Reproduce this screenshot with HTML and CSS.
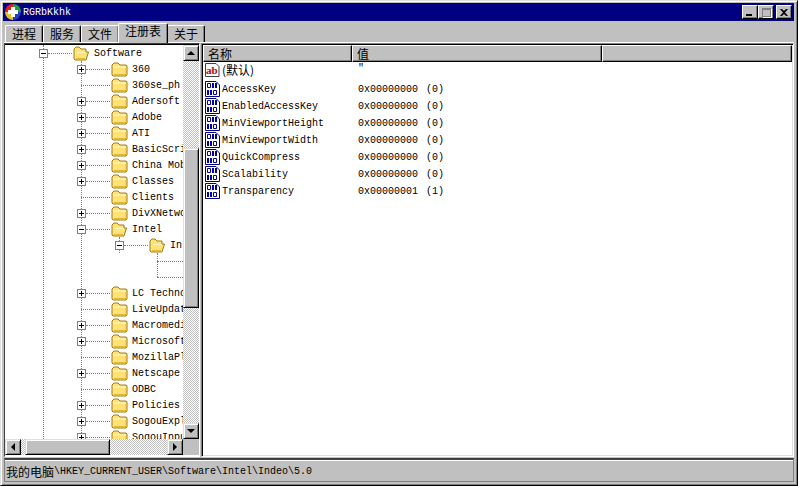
FILE: index.html
```html
<!DOCTYPE html>
<html>
<head>
    <title>RGRbKkhk</title>
    <link rel="stylesheet" href="styles.css">
</head>
<body>
    <svg class="defs" width="0" height="0">
        <symbol id="folder" viewBox="0 0 18 16">
            <path d="M2 4 L4 2 H8 L10 4 H16 L17 5 V14 L16 15 H3 L2 14 Z" fill="#ffe27a" stroke="#9c7c10"/>
            <path d="M3 6 H16" stroke="#fff6c0"/>
            <path d="M4 13.5 H16 V7" fill="none" stroke="#e8b830"/>
        </symbol>
        <symbol id="open" viewBox="0 0 18 16">
            <path d="M2 4 L4 2 H7 L9 4 H14 V7 H16.5 L14 15 H3 L2 14 Z" fill="#ffe27a" stroke="#9c7c10"/>
            <path d="M5 7.5 H14" stroke="#fff6c0"/>
            <path d="M4 13.5 H13" stroke="#e8b830"/>
        </symbol>
        <symbol id="bin" viewBox="0 0 16 16">
            <path d="M1.5 .5 H12 L15.5 4 V15.5 H1.5 Z" fill="#fff" stroke="#000080"/>
            <path d="M3.500 2.500 h3 v4 h-3 z M9.500 9.500 h3 v4 h-3 z" fill="#fff" stroke="#0000a0"/>
            <path d="M8 2 h2 v5 h-2 z M11 2 h2 v5 h-2 z M3 9 h2 v5 h-2 z M6 9 h2 v5 h-2 z" fill="#0000a0"/>
        </symbol>
        <symbol id="str" viewBox="0 0 16 16">
            <path d="M1.500 .5 H12 L15 3.500 V13.500 H1.500 Z" fill="#fff" stroke="#404040"/>
            <text x="2" y="10.500" class="ab-text">ab</text>
        </symbol>
    </svg>

    <div class="window">
        <div class="titlebar">
            <svg class="logo" width="16" height="16" viewBox="0 0 16 16">
                <path d="M8 8 V0 A8 8 0 0 0 0 8 Z" fill="#e02020"/>
                <path d="M8 8 V0 A8 8 0 0 1 16 8 Z" fill="#20a040"/>
                <path d="M8 8 H16 A8 8 0 0 1 8 16 Z" fill="#2040c0"/>
                <path d="M8 8 H0 A8 8 0 0 0 8 16 Z" fill="#e8c020"/>
                <path d="M6 3 H10 V6 H13 V10 H10 V13 H6 V10 H3 V6 H6 Z" fill="#fff"/>
            </svg>
            <span class="title">RGRbKkhk</span>
            <div class="winbtns">
                <button class="winbtn"><span class="min"></span></button>
                <button class="winbtn disabled"><span class="max"></span></button>
                <button class="winbtn close">
                    <svg width="8" height="7" viewBox="0 0 8 7"><path d="M0 0 h2 l2 2 l2 -2 h2 l-3 3.5 l3 3.5 h-2 l-2 -2 l-2 2 h-2 l3 -3.5 z" fill="#000"/></svg>
                </button>
            </div>
        </div>

        <div class="tabs">
            <div class="tab">进程</div>
            <div class="tab">服务</div>
            <div class="tab">文件</div>
            <div class="tab active">注册表</div>
            <div class="tab">关于</div>
        </div>

        <div class="panel">
            <div class="tree-box">
                <div class="tree-view">
                    <div class="tree" id="tree"></div>
                    <div class="vline v1"></div>
                    <div class="vline v2"></div>
                    <div class="vline v3"></div>
                    <div class="vline v4"></div>
                </div>
                <div class="vscroll">
                    <div class="sbtn"><i class="arrow up"></i></div>
                    <div class="track vtrack-top"></div>
                    <div class="thumb vthumb"></div>
                    <div class="track"></div>
                    <div class="sbtn"><i class="arrow down"></i></div>
                </div>
                <div class="hscroll">
                    <div class="sbtn"><i class="arrow left"></i></div>
                    <div class="track htrack-left"></div>
                    <div class="thumb hthumb"></div>
                    <div class="track"></div>
                    <div class="sbtn"><i class="arrow right"></i></div>
                </div>
                <div class="corner"></div>
            </div>

            <div class="list-box">
                <div class="list-head">
                    <div class="col c1">名称</div>
                    <div class="col c2">值</div>
                    <div class="col c3"></div>
                </div>
                <div class="list-row default">
                    <svg class="ico" width="16" height="16"><use href="#str"/></svg>
                    <span class="name cn">(默认)</span><span class="val">"</span>
                </div>
                <div class="list-row">
                    <svg class="ico" width="16" height="16"><use href="#bin"/></svg>
                    <span class="name">AccessKey</span><span class="val">0x00000000 (0)</span>
                </div>
                <div class="list-row">
                    <svg class="ico" width="16" height="16"><use href="#bin"/></svg>
                    <span class="name">EnabledAccessKey</span><span class="val">0x00000000 (0)</span>
                </div>
                <div class="list-row">
                    <svg class="ico" width="16" height="16"><use href="#bin"/></svg>
                    <span class="name">MinViewportHeight</span><span class="val">0x00000000 (0)</span>
                </div>
                <div class="list-row">
                    <svg class="ico" width="16" height="16"><use href="#bin"/></svg>
                    <span class="name">MinViewportWidth</span><span class="val">0x00000000 (0)</span>
                </div>
                <div class="list-row">
                    <svg class="ico" width="16" height="16"><use href="#bin"/></svg>
                    <span class="name">QuickCompress</span><span class="val">0x00000000 (0)</span>
                </div>
                <div class="list-row">
                    <svg class="ico" width="16" height="16"><use href="#bin"/></svg>
                    <span class="name">Scalability</span><span class="val">0x00000000 (0)</span>
                </div>
                <div class="list-row">
                    <svg class="ico" width="16" height="16"><use href="#bin"/></svg>
                    <span class="name">Transparency</span><span class="val">0x00000001 (1)</span>
                </div>
            </div>
        </div>

        <div class="statusbar"><span class="cn">我的电脑</span>\HKEY_CURRENT_USER\Software\Intel\Indeo\5.0</div>
    </div>

    <script>
        // name, level, expander: "+", "-" or ""
        const rows = [
            ["Software", 0, "-"], ["360", 1, "+"], ["360se_ph", 1, ""], ["Adersoft", 1, "+"],
            ["Adobe", 1, "+"], ["ATI", 1, "+"], ["BasicScri", 1, "+"], ["China Mob", 1, "+"],
            ["Classes", 1, "+"], ["Clients", 1, ""], ["DivXNetwo", 1, "+"], ["Intel", 1, "-"],
            ["In", 2, "-"], [null, 3], [null, 3],
            ["LC Techno", 1, "+"], ["LiveUpdat", 1, ""], ["Macromedi", 1, "+"], ["Microsoft", 1, "+"],
            ["MozillaPl", 1, ""], ["Netscape", 1, "+"], ["ODBC", 1, ""], ["Policies", 1, "+"],
            ["SogouExpl", 1, "+"], ["SogouInpu", 1, "+"]
        ];

        let html = "";
        for (const [name, level, exp] of rows) {
            if (name === null) {
                html += `<div class="row l${level}"><span class="dash"></span></div>`;
                continue;
            }
            const box = exp ? `<span class="exp">${exp === "-" ? '<i class="h"></i>' : '<i class="h"></i><i class="v"></i>'}</span>` : `<span class="noexp"></span>`;
            const icon = exp === "-" ? "open" : "folder";
            html += `<div class="row l${level}">${box}<span class="dash"></span><svg class="fold" width="18" height="16"><use href="#${icon}"/></svg><span class="label">${name}</span></div>`;
        }
        document.getElementById("tree").innerHTML = html;
    </script>
</body>
</html>
```

FILE: styles.css
```css
* {
    box-sizing: border-box;
}

html, body {
    margin: 0;
    height: 100%;
    overflow: hidden;
}

body {
    background-color: #C0C0C0;
    font-family: "Liberation Mono", "Noto Sans CJK SC", monospace;
    font-size: 10px;
    color: #000;
}

.defs {
    position: absolute;
}

.ab-text {
    font-family: "Liberation Serif", serif;
    font-weight: bold;
    font-size: 11px;
    fill: #c00000;
}

.cn {
    font-family: "Noto Sans CJK SC", sans-serif;
    font-size: 12px;
}

.window {
    width: 798px;
    height: 486px;
    padding: 3px;
    display: flex;
    flex-direction: column;
    background-color: #C0C0C0;
    border: 1px solid;
    border-color: #DFDFDF #000 #000 #DFDFDF;
    box-shadow: inset 1px 1px 0 #FFF, inset -1px -1px 0 #808080;
}

.titlebar {
    height: 18px;
    flex: none;
    margin: -1px 0 0 -1px;
    padding: 0 2px;
    display: flex;
    align-items: center;
    background-color: #000080;
    color: #FFF;
}

.logo {
    margin-right: 2px;
}

.title {
    font-size: 10px;
}

.winbtns {
    margin-left: auto;
    display: flex;
}

.winbtn {
    width: 16px;
    height: 14px;
    padding: 0;
    background-color: #C0C0C0;
    border: 1px solid;
    border-color: #FFF #000 #000 #FFF;
    box-shadow: inset -1px -1px 0 #808080;
    display: flex;
    align-items: center;
    justify-content: center;
}

.winbtn.close {
    margin-left: 2px;
}

.min {
    width: 6px;
    height: 2px;
    background-color: #000;
    margin: 6px 3px 0 0;
}

.max {
    width: 9px;
    height: 9px;
    border: 1px solid #808080;
    border-top-width: 2px;
    box-shadow: 1px 1px 0 #FFF;
}

.tabs {
    height: 22px;
    flex: none;
    padding-left: 1px;
    display: flex;
    align-items: flex-end;
    border-bottom: 1px solid #FFF;
    position: relative;
    z-index: 1;
}

.tab {
    height: 17px;
    padding: 0 6px;
    font-family: "Noto Sans CJK SC", sans-serif;
    font-size: 12px;
    line-height: 15px;
    background-color: #C0C0C0;
    border: 1px solid;
    border-color: #FFF #000 transparent #FFF;
    border-bottom: 0;
    border-radius: 2px 2px 0 0;
    box-shadow: inset -1px 0 0 #808080;
}

.tab.active {
    height: 20px;
    margin: 0 -1px -1px -1px;
    padding: 0 6px;
    line-height: 14px;
    position: relative;
}

.panel {
    flex: 1;
    min-height: 0;
    display: flex;
    gap: 1px;
}

.tree-box {
    width: 196px;
    height: 414px;
    flex: none;
    background-color: #FFF;
    border: 1px solid;
    border-color: #404040 #FFF #FFF #404040;
    box-shadow: inset 0 1px 0 #000;
    padding: 1px 0 0 0;
    display: grid;
    grid-template-columns: 178px 16px;
    grid-template-rows: 394px 16px;
}

.tree-view {
    position: relative;
    overflow: hidden;
}

.row {
    height: 16px;
    display: flex;
    align-items: center;
    position: relative;
    z-index: 1;
}

.row.l0 { padding-left: 34px; }
.row.l1 { padding-left: 72px; }
.row.l2 { padding-left: 110px; }
.row.l3 { padding-left: 152px; }

.exp {
    width: 9px;
    height: 9px;
    flex: none;
    border: 1px solid #808080;
    background-color: #FFF;
    position: relative;
}

.exp .h {
    position: absolute;
    left: 1px;
    top: 3px;
    width: 5px;
    height: 1px;
    background-color: #000;
}

.exp .v {
    position: absolute;
    left: 3px;
    top: 1px;
    width: 1px;
    height: 5px;
    background-color: #000;
}

.noexp {
    width: 9px;
    flex: none;
}

.dash {
    width: 24px;
    flex: none;
    border-top: 1px dotted #808080;
}

.noexp + .dash {
    width: 29px;
    margin-left: -5px;
}

.row.l3 .dash {
    width: 26px;
}

.fold {
    flex: none;
}

.label {
    margin-left: 4px;
    padding-top: 1px;
    white-space: pre;
}

.vline {
    position: absolute;
    width: 0;
    border-left: 1px dotted #808080;
}

.v1 { left: 38px; top: 0; bottom: 0; }
.v2 { left: 76px; top: 16px; bottom: 0; }
.v3 { left: 114px; top: 192px; height: 16px; }
.v4 { left: 152px; top: 208px; height: 24px; }

.vscroll {
    width: 16px;
    height: 394px;
    display: flex;
    flex-direction: column;
}

.hscroll {
    width: 178px;
    height: 16px;
    display: flex;
}

.corner {
    background-color: #C0C0C0;
}

.sbtn, .thumb {
    background-color: #C0C0C0;
    border: 1px solid;
    border-color: #DFDFDF #000 #000 #DFDFDF;
    box-shadow: inset 1px 1px 0 #FFF, inset -1px -1px 0 #808080;
    flex: none;
}

.sbtn {
    width: 16px;
    height: 16px;
    display: flex;
    align-items: center;
    justify-content: center;
}

.track {
    flex: 1;
    background-color: #FFF;
    background-image: conic-gradient(#C0C0C0 25%, #FFF 0 50%, #C0C0C0 0 75%, #FFF 0);
    background-size: 2px 2px;
}

.vtrack-top {
    flex: none;
    height: 87px;
}

.htrack-left {
    flex: none;
    width: 4px;
}

.vthumb {
    height: 160px;
}

.hthumb {
    width: 85px;
}

.arrow {
    width: 0;
    height: 0;
    border: 4px solid transparent;
}

.arrow.up { border-bottom-color: #000; border-top-width: 0; }
.arrow.down { border-top-color: #000; border-bottom-width: 0; }
.arrow.left { border-right-color: #000; border-left-width: 0; }
.arrow.right { border-left-color: #000; border-right-width: 0; }

.list-box {
    flex: 1;
    height: 414px;
    background-color: #FFF;
    border: 1px solid;
    border-color: #808080 #FFF #FFF #808080;
    box-shadow: inset 1px 1px 0 #000, inset -1px -1px 0 #DFDFDF;
    padding: 1px 1px 0 1px;
    overflow: hidden;
}

.list-head {
    display: flex;
    height: 17px;
    margin-bottom: 1px;
}

.col {
    height: 17px;
    padding-left: 4px;
    font-family: "Noto Sans CJK SC", sans-serif;
    font-size: 12px;
    line-height: 15px;
    background-color: #C0C0C0;
    border: 1px solid;
    border-color: #FFF #000 #000 #FFF;
    box-shadow: inset -1px -1px 0 #808080;
}

.c1 { width: 149px; }
.c2 { width: 250px; }
.c3 { flex: 1; }

.list-row {
    height: 17px;
    display: flex;
    align-items: center;
    padding-left: 1px;
}

.list-row .name, .list-row .val {
    padding-top: 1px;
}

.list-row.default {
    align-items: flex-start;
}

.list-row.default .name {
    padding-top: 0;
    line-height: 14px;
}

.list-row.default .val {
    padding-top: 0;
    line-height: 12px;
}

.ico {
    flex: none;
    margin-right: 2px;
}

.name {
    width: 136px;
    flex: none;
    white-space: pre;
}

.val {
    white-space: pre;
    word-spacing: 2px;
}

.statusbar {
    height: 24px;
    flex: none;
    padding: 1px 0 0 1px;
    border: 1px solid;
    border-color: #404040 #808080 #808080 #808080;
    border-top-width: 2px;
    box-shadow: inset 0 1px 0 #FFF;
    white-space: pre;
    display: flex;
    align-items: center;
}
```
